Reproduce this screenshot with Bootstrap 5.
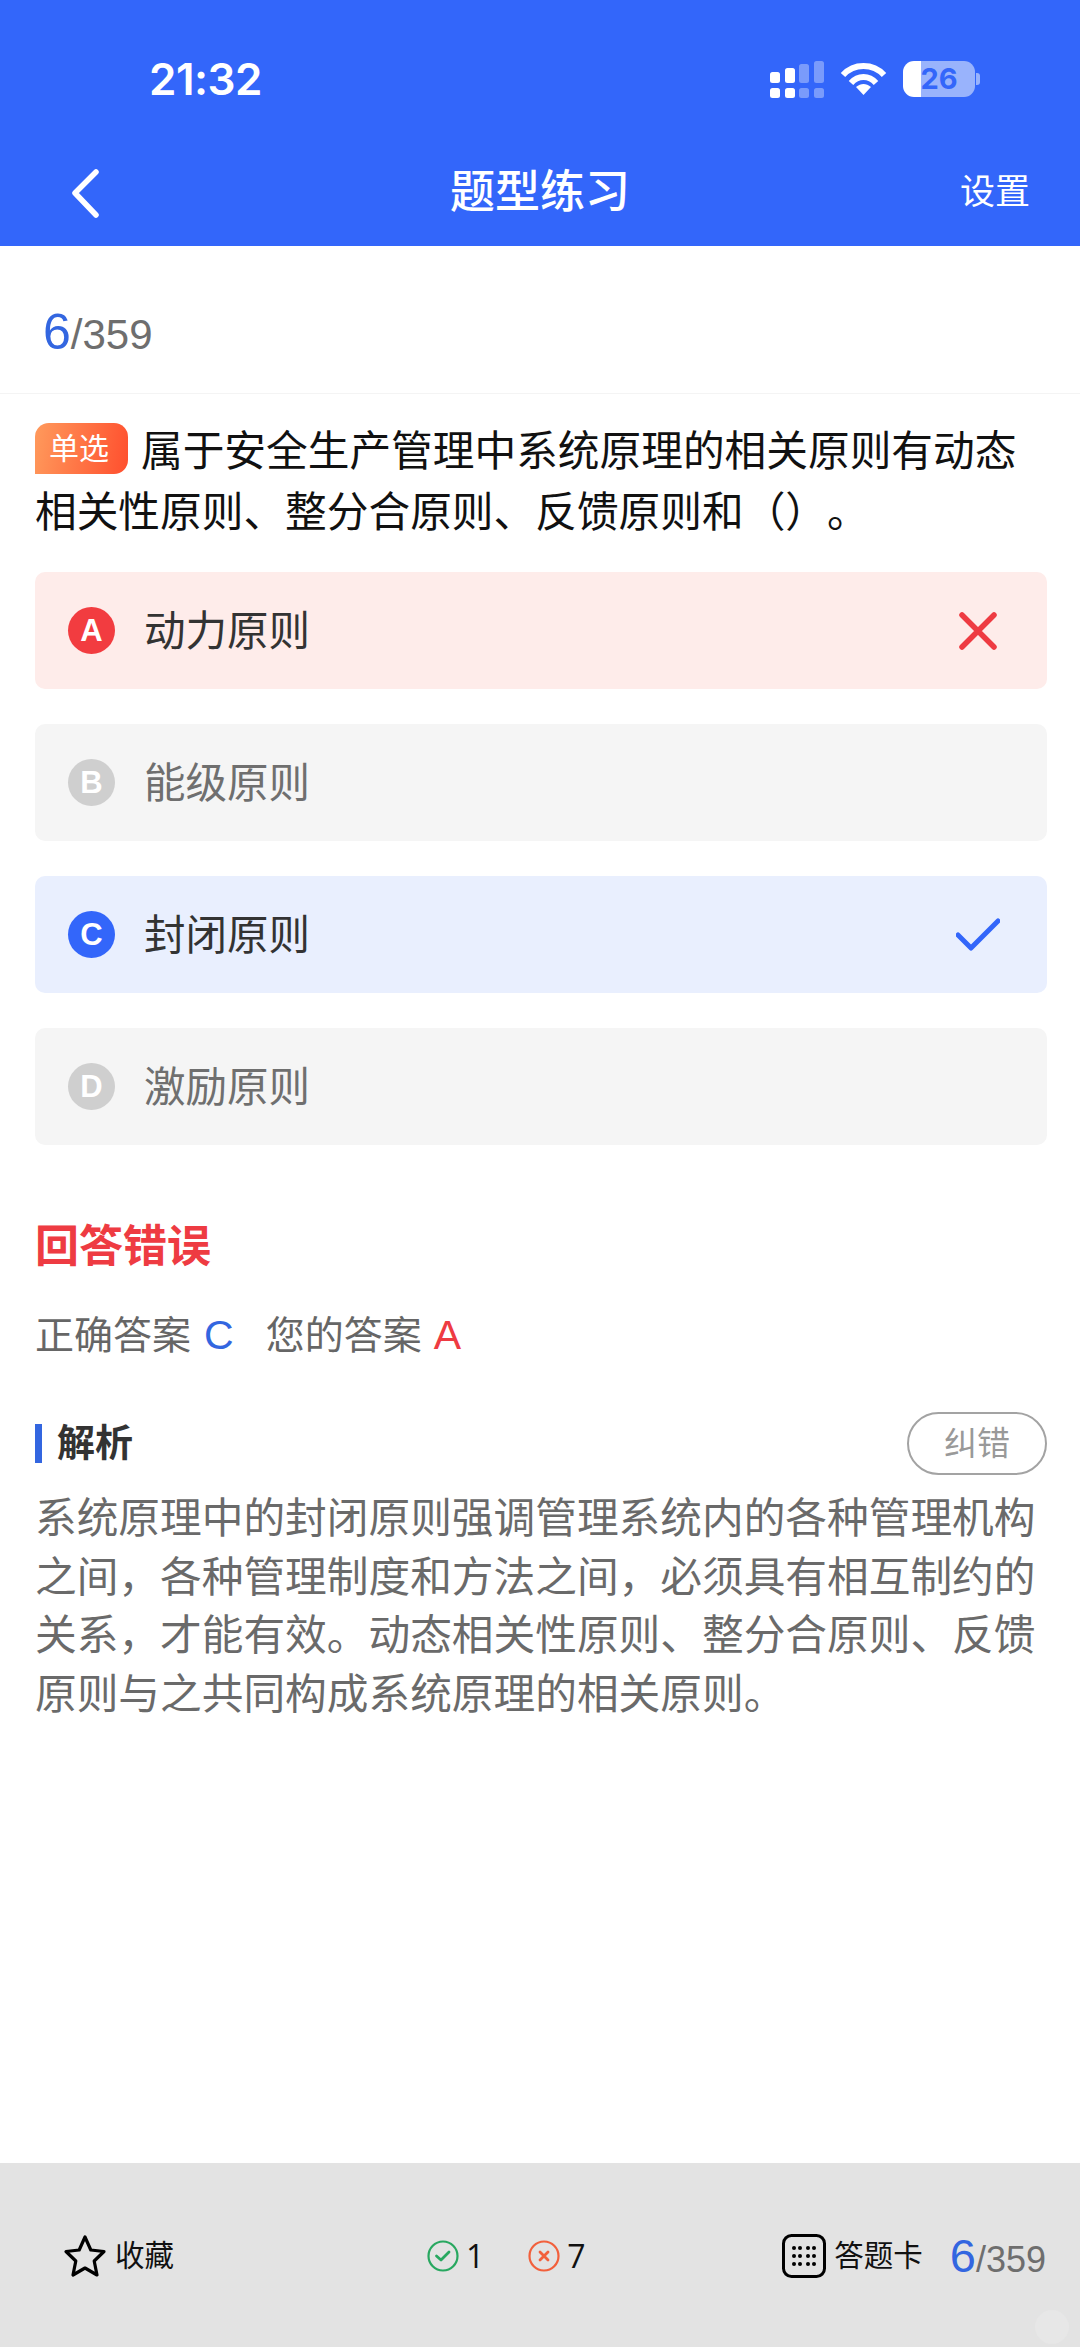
<!DOCTYPE html>
<html lang="zh-CN">
<head>
    <meta charset="UTF-8">
    <meta name="viewport" content="width=device-width, initial-scale=1.0">
    <title>题型练习</title>
    <link href="https://cdn.jsdelivr.net/npm/bootstrap@5.3.1/dist/css/bootstrap.min.css" rel="stylesheet">
    <style>
        body {
            font-family: "Liberation Sans", "Noto Sans CJK SC", sans-serif;
            background-color: #ffffff;
            color: #333333;
            text-spacing-trim: space-all;
        }
        .page-wrap { height: 2347px; }
        .top-head { background-color: #3366fa; color: #ffffff; height: 246px; }
        .status-row { height: 158px; padding: 0 100px 0 149px; }
        .clock { font-family: Inter, sans-serif; font-size: 44px; font-weight: 600; letter-spacing: -0.5px; }
        .batt {
            width: 72px; height: 36px; border-radius: 11px; font-family: Inter, sans-serif;
            font-size: 29px; font-weight: 700; color: #3366fa; line-height: 36px; text-align: center;
            background: linear-gradient(90deg, #ffffff 25%, #99b3fc 25%);
        }
        .batt-nub { width: 4px; height: 12px; background-color: #99b3fc; border-radius: 0 3px 3px 0; margin-left: 1px; }
        .nav-row { display: grid; grid-template-columns: 1fr auto 1fr; height: 64px; padding: 0 50px; }
        .back-ico { margin-left: 19px; margin-top: 2px; }
        .nav-title { font-size: 45px; font-weight: 500; line-height: 64px; padding-top: 3px; }
        .nav-set { font-size: 35px; line-height: 64px; }
        .prog-row { height: 148px; padding: 49px 0 0 43px; border-bottom: 1px solid #f4f4f4; }
        .prog-row .num-big { font-size: 50px; }
        .prog-row .num-small { font-size: 42px; }
        .num-big { font-size: 47px; color: #3366e0; }
        .num-small { font-size: 36px; color: #6e6e6e; }
        .q-text { padding: 27px 35px 0; font-size: 41.7px; line-height: 61px; color: #111111; }
        .q-tag {
            display: inline-block; width: 93px; height: 51px; margin-right: 13px; padding-right: 5px; line-height: 51px;
            font-size: 30px; color: #ffffff; text-align: center; vertical-align: 7px;
            border-radius: 14px 14px 14px 0; background: linear-gradient(100deg, #ff9a5c, #ff4f2e);
        }
        .opt-list { padding: 29px 33px 0 35px; gap: 35px; }
        .opt-row { height: 117px; border-radius: 10px; padding: 0 47px 0 33px; font-size: 41.5px; }
        .opt-bad { background-color: #feecea; color: #333333; }
        .opt-plain { background-color: #f5f5f5; color: #6f6f6f; }
        .opt-good { background-color: #e9effe; color: #333333; }
        .opt-dot {
            width: 47px; height: 47px; border-radius: 50%; margin-right: 29px; color: #ffffff;
            font-size: 31px; font-weight: 700; line-height: 47px; text-align: center; flex-shrink: 0;
        }
        .opt-label { padding-top: 4px; }
        .dot-red { background-color: #f23c40; }
        .dot-gray { background-color: #cfcfcf; }
        .dot-blue { background-color: #3366fa; }
        .res-title { padding: 72px 35px 0; font-size: 44px; font-weight: 700; line-height: 60px; color: #ee3b42; }
        .res-line { padding: 30px 35px 0; font-size: 39px; line-height: 56px; color: #666666; }
        .ans-blue { color: #3366e0; font-size: 41px; margin: 0 32px 0 13px; }
        .ans-red { color: #ee3b42; font-size: 41px; margin-left: 12px; }
        .expl-head { padding: 0 33px 0 35px; margin-top: 48px; height: 63px; }
        .expl-bar { width: 7px; height: 39px; background-color: #3366e0; margin-right: 15px; }
        .expl-label { font-size: 38px; font-weight: 700; color: #333333; }
        .fix-btn {
            width: 140px; height: 63px; border: 2px solid #a3a3a3; border-radius: 32px; color: #999999;
            font-size: 33px; line-height: 58px; padding: 0; background: transparent;
        }
        .expl-text { padding: 15px 36px 0 35px; font-size: 41.7px; line-height: 58.7px; color: #6a6a6a; }
        .foot-bar { height: 184px; background-color: #e3e3e3; padding: 70px 34px 0 63px; color: #111111; }
        .foot-bar .foot-item { height: 46px; }
        .foot-txt { font-size: 29.5px; }
        .foot-num { font-family: "Open Sans", sans-serif; font-size: 32px; margin-left: 7px; }
        .foot-prog { margin-left: 27px; }
        .center-stats { margin-left: 253px; }
        .x-ico { margin-left: 44px; }
        .touch-dot {
            position: absolute; right: 11px; bottom: 3px; width: 34px; height: 34px; border-radius: 50%;
            background-color: #e7e7e7;
        }
    </style>
</head>
<body>
<div class="page-wrap d-flex flex-column position-relative">
    <header class="top-head">
        <div class="status-row d-flex align-items-center justify-content-between">
            <span class="clock">21:32</span>
            <div class="d-flex align-items-center">
                <svg width="54" height="37" viewBox="0 0 54 37" class="me-3" fill="#fff">
                    <rect x="0" y="27" width="10" height="10" rx="2.5"/>
                    <rect x="15" y="27" width="10" height="10" rx="2.5"/>
                    <rect x="0" y="11" width="10" height="11" rx="2.5"/>
                    <rect x="15" y="7" width="10" height="15" rx="2.5"/>
                    <g opacity=".35">
                        <rect x="29" y="27" width="10" height="10" rx="2.5"/>
                        <rect x="44" y="27" width="10" height="10" rx="2.5"/>
                        <rect x="29" y="3" width="10" height="19" rx="2.5"/>
                        <rect x="44" y="0" width="10" height="22" rx="2.5"/>
                    </g>
                </svg>
                <svg width="47" height="34" viewBox="0 0 47 34" class="me-3" fill="none" stroke="#fff" stroke-width="6">
                    <path d="M3 13 C14 1 33 1 44 13"/>
                    <path d="M11 21 C18 13 29 13 36 21"/>
                    <path d="M16 25 L23.5 33 L31 25 C26 21 21 21 16 25Z" fill="#fff" stroke="none"/>
                </svg>
                <div class="batt">26</div>
                <div class="batt-nub"></div>
            </div>
        </div>
        <div class="nav-row align-items-center">
            <svg width="32" height="50" viewBox="0 0 32 50" class="back-ico" fill="none" stroke="#fff" stroke-width="5.5" stroke-linecap="round" stroke-linejoin="round">
                <path d="M27 4 L6 25 L27 47"/>
            </svg>
            <div class="nav-title">题型练习</div>
            <div class="nav-set text-end">设置</div>
        </div>
    </header>

    <div class="prog-row"><span class="num-big">6</span><span class="num-small">/359</span></div>

    <div class="q-text"><span class="q-tag">单选</span>属于安全生产管理中系统原理的相关原则有动态相关性原则、整分合原则、反馈原则和（）。</div>

    <div class="opt-list d-flex flex-column">
        <div class="opt-row opt-bad d-flex align-items-center">
            <span class="opt-dot dot-red">A</span>
            <span class="opt-label flex-grow-1">动力原则</span>
            <svg width="44" height="44" viewBox="0 0 44 44" fill="none" stroke="#ee3b42" stroke-width="5.5" stroke-linecap="round"><path d="M6 6 L38 38 M38 6 L6 38"/></svg>
        </div>
        <div class="opt-row opt-plain d-flex align-items-center">
            <span class="opt-dot dot-gray">B</span>
            <span class="opt-label flex-grow-1">能级原则</span>
        </div>
        <div class="opt-row opt-good d-flex align-items-center">
            <span class="opt-dot dot-blue">C</span>
            <span class="opt-label flex-grow-1">封闭原则</span>
            <svg width="44" height="44" viewBox="0 0 44 44" fill="none" stroke="#3366fa" stroke-width="5" stroke-linecap="round" stroke-linejoin="round"><path d="M2 22 L15 35 L42 8"/></svg>
        </div>
        <div class="opt-row opt-plain d-flex align-items-center">
            <span class="opt-dot dot-gray">D</span>
            <span class="opt-label flex-grow-1">激励原则</span>
        </div>
    </div>

    <div class="res-title">回答错误</div>
    <div class="res-line">正确答案<span class="ans-blue">C</span>您的答案<span class="ans-red">A</span></div>

    <div class="expl-head d-flex align-items-center">
        <span class="expl-bar"></span>
        <span class="expl-label flex-grow-1">解析</span>
        <button type="button" class="btn fix-btn">纠错</button>
    </div>
    <div class="expl-text">系统原理中的封闭原则强调管理系统内的各种管理机构之间，各种管理制度和方法之间，必须具有相互制约的关系，才能有效。动态相关性原则、整分合原则、反馈原则与之共同构成系统原理的相关原则。</div>

    <footer class="foot-bar mt-auto d-flex align-items-start">
        <div class="foot-item d-flex align-items-center">
            <svg width="44" height="44" viewBox="0 0 44 44" class="me-2" fill="none" stroke="#000" stroke-width="3.2" stroke-linejoin="round">
                <path d="M22 3 L27.8 16 L41 17.5 L31.2 27 L34 41 L22 34 L10 41 L12.8 27 L3 17.5 L16.2 16Z"/>
            </svg>
            <span class="foot-txt">收藏</span>
        </div>
        <div class="foot-item d-flex align-items-center center-stats">
            <svg width="32" height="32" viewBox="0 0 32 32" fill="none" stroke="#28a860" stroke-width="2.2" stroke-linecap="round" stroke-linejoin="round">
                <circle cx="16" cy="16" r="14.5"/><path d="M9.5 16 L14 20 L22 12" stroke-width="2.8"/>
            </svg>
            <span class="foot-num">1</span>
            <svg width="32" height="32" viewBox="0 0 32 32" class="x-ico" fill="none" stroke="#f2603c" stroke-width="2.2" stroke-linecap="round">
                <circle cx="16" cy="16" r="14.5"/><path d="M12 12 L20 20 M20 12 L12 20" stroke-width="2.8"/>
            </svg>
            <span class="foot-num">7</span>
        </div>
        <div class="foot-item d-flex align-items-center ms-auto">
            <svg width="44" height="44" viewBox="0 0 44 44" class="me-2" fill="#000">
                <rect x="1.5" y="1.5" width="41" height="41" rx="8" fill="none" stroke="#000" stroke-width="3"/>
                <circle cx="12" cy="14" r="2"/><circle cx="18" cy="14" r="2"/><circle cx="26" cy="14" r="2"/><circle cx="32" cy="14" r="2"/>
                <circle cx="12" cy="22" r="2"/><circle cx="18" cy="22" r="2"/><circle cx="26" cy="22" r="2"/><circle cx="32" cy="22" r="2"/>
                <circle cx="12" cy="30" r="2"/><circle cx="18" cy="30" r="2"/><circle cx="26" cy="30" r="2"/><circle cx="32" cy="30" r="2"/>
            </svg>
            <span class="foot-txt">答题卡</span>
            <span class="foot-prog"><span class="num-big">6</span><span class="num-small">/359</span></span>
        </div>
    </footer>
    <span class="touch-dot"></span>
</div>
<script src="https://cdn.jsdelivr.net/npm/bootstrap@5.3.1/dist/js/bootstrap.bundle.min.js"></script>
</body>
</html>
